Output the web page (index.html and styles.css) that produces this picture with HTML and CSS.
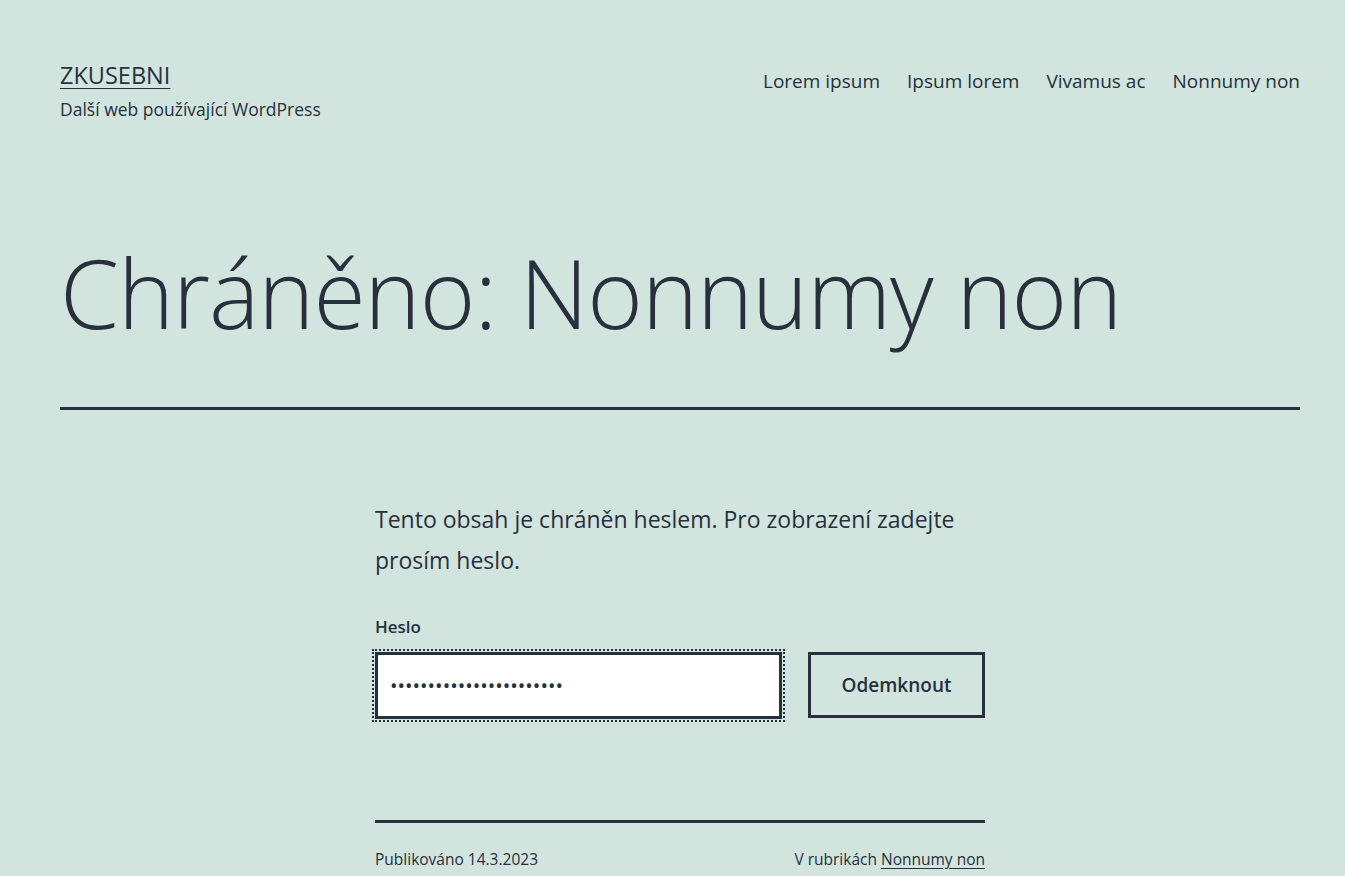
FILE: index.html
```html
<!DOCTYPE html>
<html lang="cs">
<head>
<meta charset="utf-8">
<title>Chráněno: Nonnumy non – ZKUSEBNI</title>
<link rel="stylesheet" href="styles.css">
</head>
<body>
<div class="site">
  <header class="site-header">
    <div class="branding">
      <p class="site-title"><a href="#">ZKUSEBNI</a></p>
      <p class="site-description">Další web používající WordPress</p>
    </div>
    <nav class="primary-nav">
      <ul class="menu">
        <li><a href="#">Lorem ipsum</a></li>
        <li><a href="#">Ipsum lorem</a></li>
        <li><a href="#">Vivamus ac</a></li>
        <li><a href="#">Nonnumy non</a></li>
      </ul>
    </nav>
  </header>

  <main class="site-main">
    <header class="entry-header">
      <h1 class="entry-title">Chráněno: Nonnumy non</h1>
    </header>

    <div class="entry-content">
      <form class="post-password-form">
        <p class="intro">Tento obsah je chráněn heslem. Pro zobrazení zadejte prosím heslo.</p>
        <label class="pw-label" for="pwbox">Heslo</label>
        <div class="pw-row">
          <input class="pw-input" id="pwbox" type="password" value="aaaaaaaaaaaaaaaaaaaaaaa">
          <button class="pw-submit" type="button">Odemknout</button>
        </div>
      </form>
    </div>

    <footer class="entry-footer">
      <span class="posted-on">Publikováno 14.3.2023</span>
      <span class="cat-links">V rubrikách <a href="#">Nonnumy non</a></span>
    </footer>
  </main>
</div>
</body>
</html>
```
FILE: styles.css
```css
html, body {
  margin: 0;
  padding: 0;
}
body {
  background: #d1e4dd;
  color: #28303d;
  font-family: "Open Sans", "Noto Sans", sans-serif;
  -webkit-font-smoothing: antialiased;
}
a {
  color: #28303d;
}
.site {
  padding: 0 45px 0 60px;
}
.site-header {
  display: flex;
  justify-content: space-between;
  align-items: flex-start;
  padding-top: 60px;
}
.site-title {
  margin: 0;
  font-size: 23.5px;
  line-height: 30px;
}
.site-title a {
  text-decoration: underline;
  text-decoration-thickness: 1px;
  text-underline-offset: 4px;
}
.site-description {
  margin: 7px 0 0;
  font-size: 17.5px;
  line-height: 24px;
}
.menu {
  list-style: none;
  margin: 8px 0 0;
  padding: 0;
  display: flex;
  gap: 27px;
}
.menu a {
  text-decoration: none;
  font-size: 19px;
  line-height: 26px;
}
.entry-header {
  padding-top: 109px;
  padding-bottom: 53px;
  border-bottom: 3px solid #28303d;
}
.entry-title {
  margin: 0;
  font-size: 95px;
  font-weight: 300;
  line-height: 124px;
  letter-spacing: -1px;
}
.entry-content {
  width: 610px;
  margin: 0 auto;
  padding-top: 89px;
}
.post-password-form {
  margin: 0;
}
.intro {
  margin: 0 0 34px;
  font-size: 23px;
  line-height: 41px;
}
.pw-label {
  display: block;
  font-size: 17px;
  font-weight: 600;
  line-height: 24px;
  margin-bottom: 13px;
}
.pw-row {
  display: flex;
  gap: 26px;
  align-items: flex-start;
}
.pw-input {
  box-sizing: border-box;
  width: 407px;
  height: 67px;
  margin: 0;
  border: 3px solid #28303d;
  border-radius: 0;
  background: #fff;
  padding: 0 12px;
  font-family: "Open Sans", sans-serif;
  font-size: 20px;
  color: #28303d;
  outline: 2px dotted #28303d;
  outline-offset: 1px;
}
.pw-submit {
  box-sizing: border-box;
  width: 177px;
  height: 66px;
  margin: 0;
  border: 3px solid #28303d;
  border-radius: 0;
  background: transparent;
  color: #28303d;
  font-family: "Open Sans", sans-serif;
  font-size: 19px;
  font-weight: 600;
}
.entry-footer {
  width: 610px;
  margin: 101px auto 0;
  padding-top: 24px;
  border-top: 3px solid #28303d;
  display: flex;
  justify-content: space-between;
  font-size: 15.5px;
  line-height: 24px;
}
.cat-links a {
  text-decoration: underline;
  text-underline-offset: 3px;
}
```
